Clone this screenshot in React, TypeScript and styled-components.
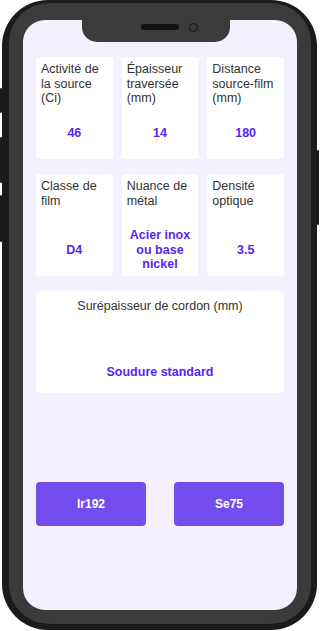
import styled, { createGlobalStyle } from "styled-components";

const GlobalStyle = createGlobalStyle`
  html, body {
    margin: 0;
    padding: 0;
    background: #ffffff;
  }
  body {
    font-family: "Liberation Sans", Arial, sans-serif;
  }
  * {
    box-sizing: border-box;
  }
`;

type Param = {
  label: string;
  value: string;
};

const PARAMS: Param[] = [
  { label: "Activité de la source (Ci)", value: "46" },
  { label: "Épaisseur traversée (mm)", value: "14" },
  { label: "Distance source-film (mm)", value: "180" },
  { label: "Classe de film", value: "D4" },
  { label: "Nuance de métal", value: "Acier inox ou base nickel" },
  { label: "Densité optique", value: "3.5" },
];

const Stage = styled.div`
  padding-left: 2px;
`;

const Phone = styled.div`
  position: relative;
  width: 315px;
  height: 630px;
  padding: 3px 6px 6px 7px;
  background: #1b1b1b;
  border-radius: 46px;
`;

const SideKey = styled.span<{ $side: "left" | "right"; $top: number; $h: number }>`
  position: absolute;
  ${(p) => (p.$side === "left" ? "left: -2px;" : "right: -2px;")}
  top: ${(p) => p.$top}px;
  width: 2px;
  height: ${(p) => p.$h}px;
  background: #1b1b1b;
  border-radius: 1px;
`;

const Shell = styled.div`
  height: 100%;
  padding: 17px 14px 14px 14px;
  background: #3b3b3b;
  border-radius: 40px;
`;

const Screen = styled.main`
  position: relative;
  height: 100%;
  padding: 37px 13px 0;
  background: #f4f0fd;
  border-radius: 22px;
  overflow: hidden;
`;

const Notch = styled.div`
  position: absolute;
  top: 0;
  left: 59px;
  width: 148px;
  height: 22px;
  display: flex;
  align-items: flex-start;
  gap: 10px;
  padding: 4px 0 0 59px;
  background: #3b3b3b;
  border-radius: 0 0 15px 15px;
`;

const Speaker = styled.span`
  width: 38px;
  height: 6px;
  background: #111;
  border-radius: 3px;
`;

const Camera = styled.span`
  margin-top: -1px;
  width: 9px;
  height: 9px;
  border: 1.5px solid #151515;
  border-radius: 50%;
  background: #3b3b3b;
`;

const Grid = styled.section`
  display: grid;
  grid-template-columns: repeat(3, 1fr);
  column-gap: 9px;
  row-gap: 15px;
`;

const Card = styled.div<{ $wide?: boolean }>`
  display: flex;
  flex-direction: column;
  height: 102px;
  padding: ${(p) => (p.$wide ? "8px 5px" : "5px")};
  background: #ffffff;
  border-radius: 4px;
  ${(p) => (p.$wide ? "grid-column: 1 / -1;" : "")}
`;

const Label = styled.div<{ $center?: boolean }>`
  color: #333333;
  font-size: 12.5px;
  line-height: 14.5px;
  text-align: ${(p) => (p.$center ? "center" : "left")};
`;

const Value = styled.div<{ $h: number }>`
  margin-top: auto;
  height: ${(p) => p.$h}px;
  display: flex;
  align-items: center;
  justify-content: center;
  text-align: center;
  color: #5a1ff5;
  font-size: 12.5px;
  font-weight: 700;
  line-height: 14.5px;
`;

const Actions = styled.div`
  display: flex;
  justify-content: space-between;
  margin-top: 89px;
`;

const SourceButton = styled.button`
  width: 110px;
  height: 44px;
  border: none;
  border-radius: 4px;
  background: #744ded;
  color: #ffffff;
  font-family: "Liberation Sans", Arial, sans-serif;
  font-size: 12px;
  font-weight: 700;
`;

const App = () => {
  return (
    <>
      <GlobalStyle />
      <Stage>
        <Phone>
          <SideKey $side="left" $top={88} $h={25} />
          <SideKey $side="left" $top={137} $h={46} />
          <SideKey $side="left" $top={195} $h={47} />
          <SideKey $side="right" $top={150} $h={75} />
          <Shell>
            <Screen>
              <Notch>
                <Speaker />
                <Camera />
              </Notch>
              <Grid>
                {PARAMS.map((p) => (
                  <Card key={p.label}>
                    <Label>{p.label}</Label>
                    <Value $h={42}>{p.value}</Value>
                  </Card>
                ))}
                <Card $wide>
                  <Label $center>Surépaisseur de cordon (mm)</Label>
                  <Value $h={26}>Soudure standard</Value>
                </Card>
              </Grid>
              <Actions>
                <SourceButton>Ir192</SourceButton>
                <SourceButton>Se75</SourceButton>
              </Actions>
            </Screen>
          </Shell>
        </Phone>
      </Stage>
    </>
  );
};

export default App;
